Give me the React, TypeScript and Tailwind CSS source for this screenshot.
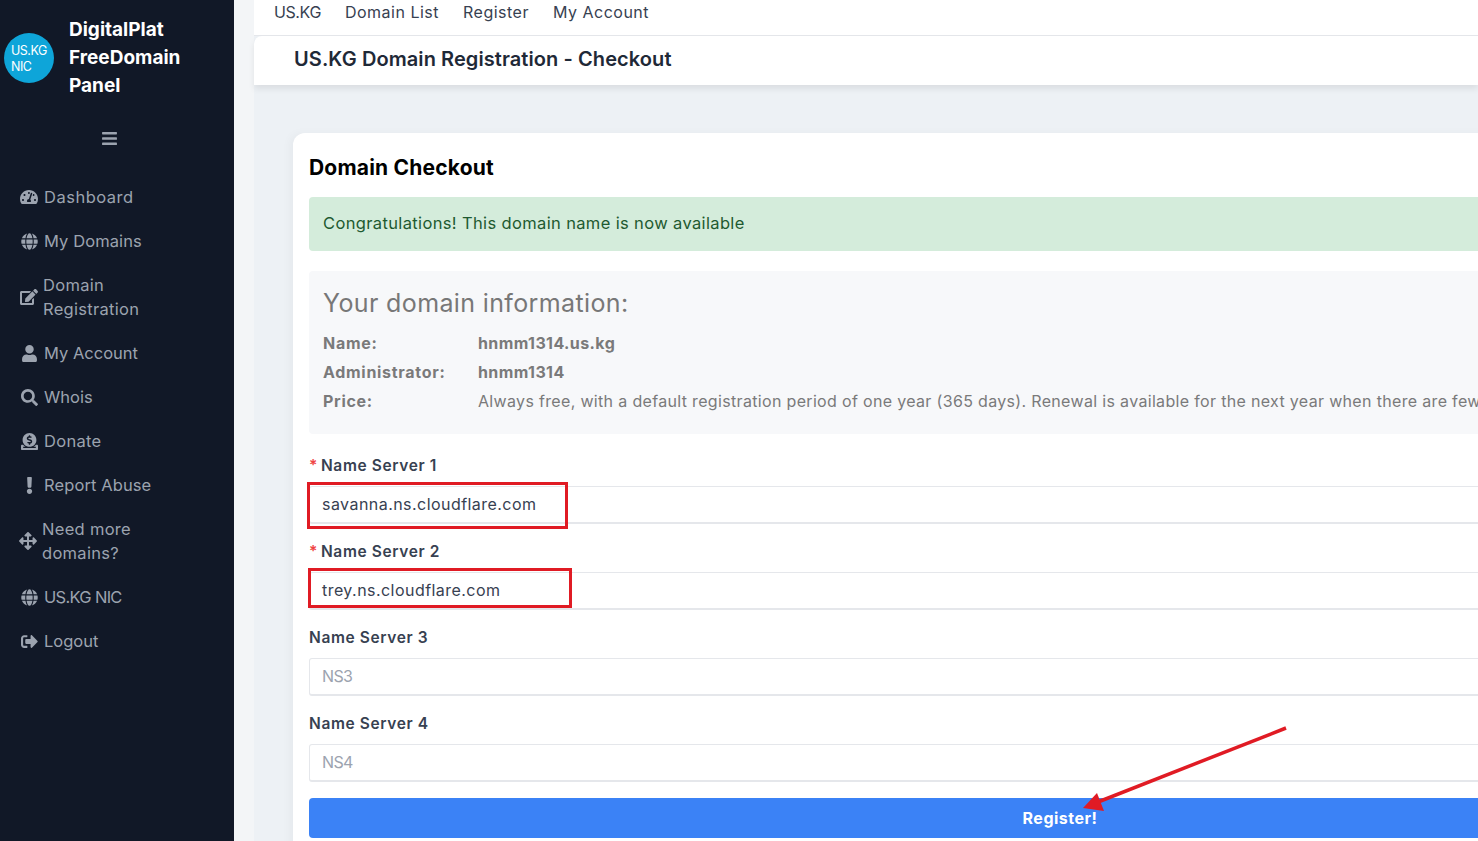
import { FaBars, FaTachometerAlt, FaGlobe, FaEdit, FaUser, FaSearch, FaDonate, FaExclamation, FaArrowsAlt, FaSignOutAlt } from "react-icons/fa";
import type { ReactNode } from "react";

const font = "font-['Inter','Noto_Sans',sans-serif]";

function SideItem({ icon, children, two, gap = "gap-[6px]", track = "tracking-[0.2px]" }: { icon: ReactNode; children: ReactNode; two?: boolean; gap?: string; track?: string }) {
  return (
    <div className={`flex items-center pl-5 text-[16.5px] leading-6 text-[#9ca3af] ${gap} ${track} ${two ? "h-[68px]" : "h-11"}`}>
      <span className="w-[18px] flex justify-center text-[17px] shrink-0">{icon}</span>
      <span className="w-[110px]">{children}</span>
    </div>
  );
}

function NsField({ label, value, placeholder, required }: { label: string; value?: string; placeholder?: string; required?: boolean }) {
  return (
    <div className="mb-[13px]">
      <div className="h-[28px] text-[15.5px] tracking-[0.62px] font-semibold text-[#374151] leading-[30px]">
        {required && <span className="text-[#ef4444] mr-[3px]">*</span>}
        {label}
      </div>
      <div className="h-[38px] mt-[7px] border border-[#e5e7eb] rounded-[3px] border-b-2 px-3 pb-[1px] flex items-center text-[16px]">
        {value ? <span className="text-[#374151] tracking-[0.45px]">{value}</span> : <span className="text-[#9ca3af] tracking-[-0.6px]">{placeholder}</span>}
      </div>
    </div>
  );
}

export default function App() {
  return (
    <div className={`${font} relative h-[841px] w-[1478px] overflow-hidden flex bg-[#f3f5f7]`}>
      <aside className="w-[234px] shrink-0 bg-[#111827]">
        <div className="flex items-center h-[116px] pl-1 gap-[15px]">
          <div className="w-[50px] h-[50px] rounded-full bg-[#0ea5d9] text-white text-[12.5px] tracking-[-0.5px] leading-4 pl-[7px] pt-[2px] flex flex-col justify-center shrink-0">
            <span>US.KG</span>
            <span>NIC</span>
          </div>
          <div className="text-white font-bold text-[19px] leading-7">
            DigitalPlat
            <br />
            FreeDomain
            <br />
            Panel
          </div>
        </div>
        <div className="flex justify-center w-[218px] h-[59px] pt-[14px] text-[#9ca3af] text-[17px]">
          <FaBars />
        </div>
        <nav>
          <SideItem icon={<FaTachometerAlt className="text-[18px]" />} track="tracking-[0.5px]">Dashboard</SideItem>
          <SideItem icon={<FaGlobe />} track="tracking-[0.1px]">My Domains</SideItem>
          <SideItem two gap="gap-[5px]" track="tracking-[0.3px]" icon={<FaEdit className="text-[18px]" />}>Domain Registration</SideItem>
          <SideItem icon={<FaUser />} track="tracking-[0px]">My Account</SideItem>
          <SideItem icon={<FaSearch />} track="tracking-[0px]">Whois</SideItem>
          <SideItem icon={<FaDonate />} track="tracking-[0.3px]">Donate</SideItem>
          <SideItem icon={<FaExclamation />} track="tracking-[0.1px]">Report Abuse</SideItem>
          <SideItem two gap="gap-[4px]" track="tracking-[0.3px]" icon={<FaArrowsAlt className="text-[18px] -ml-[2px]" />}>Need more domains?</SideItem>
          <SideItem icon={<FaGlobe />} track="tracking-[-0.7px]">US.KG NIC</SideItem>
          <SideItem icon={<FaSignOutAlt />} track="tracking-[0px]">Logout</SideItem>
        </nav>
      </aside>
      <main className="ml-5 flex-1 min-w-0 bg-[#edf1f5]">
        <div className="h-[36px] bg-white border-b border-[#e5e7eb] flex items-start gap-6 pl-5 text-[16px] tracking-[0.5px] text-[#374151]">
          <span className="tracking-[-0.4px]">US.KG</span>
          <span>Domain List</span>
          <span>Register</span>
          <span>My Account</span>
        </div>
        <div className="h-[49px] bg-white rounded-tl-lg shadow-[0_4px_6px_rgba(0,0,0,0.08)] pl-10 pb-[4px] flex items-center text-[20px] tracking-[0.08px] font-semibold text-[#1f2937]">
          US.KG Domain Registration - Checkout
        </div>
        <div className="ml-[39px] mt-[48px] w-[1534px] bg-white rounded-tl-xl px-4 pt-[21px] pb-[100px] shadow-[-4px_0_8px_rgba(0,0,0,0.03)]">
          <h2 className="text-[21px] tracking-[0.2px] font-bold text-black leading-7">Domain Checkout</h2>
          <div className="mt-[15px] h-[54px] bg-[#d4ecdb] rounded-l flex items-center pl-[14px] pb-[2px] text-[16.5px] tracking-[0.36px] text-[#1e5a30]">
            Congratulations! This domain name is now available
          </div>
          <div className="mt-[20px] h-[163px] bg-[#f7f8fa] rounded-l pl-[14px] pt-[16px] text-[#7a7a7a]">
            <div className="text-[25px] leading-8 tracking-[0.37px] text-[#777777]">Your domain information:</div>
            <div className="mt-[10px] grid grid-cols-[155px_1fr] text-[16px] leading-[29px]">
              <span className="font-bold tracking-[0.7px]">Name:</span>
              <span className="font-bold tracking-[0.4px]">hnmm1314.us.kg</span>
              <span className="font-bold tracking-[0.7px]">Administrator:</span>
              <span className="font-bold tracking-[0.4px]">hnmm1314</span>
              <span className="font-bold tracking-[0.7px]">Price:</span>
              <span className="whitespace-nowrap tracking-[0.33px]">Always free, with a default registration period of one year (365 days). Renewal is available for the next year when there are fewer than 180 days remaining.</span>
            </div>
          </div>
          <div className="mt-[17px]">
            <NsField required label="Name Server 1" value="savanna.ns.cloudflare.com" />
            <NsField required label="Name Server 2" value="trey.ns.cloudflare.com" />
            <NsField label="Name Server 3" placeholder="NS3" />
            <NsField label="Name Server 4" placeholder="NS4" />
          </div>
          <div className="mt-[16px] h-[40px] bg-[#3b82f6] text-white font-bold text-[16px] tracking-[0.5px] flex items-center justify-center rounded-sm">
            Register!
          </div>
        </div>
      </main>

      {/* red annotations drawn over the screenshot */}
      <div className="absolute left-[307px] top-[482px] w-[261px] h-[47px] border-[3px] border-[#e01b24]" />
      <div className="absolute left-[308px] top-[568px] w-[264px] h-[40px] border-[3px] border-[#e01b24]" />
      <svg className="absolute left-[1070px] top-[720px]" width="225" height="100" viewBox="0 0 225 100">
        <line x1="216" y1="8" x2="28" y2="82" stroke="#e01b24" strokeWidth="3.5" />
        <polygon points="13,88 27,73 34,91" fill="#e01b24" />
      </svg>
    </div>
  );
}
